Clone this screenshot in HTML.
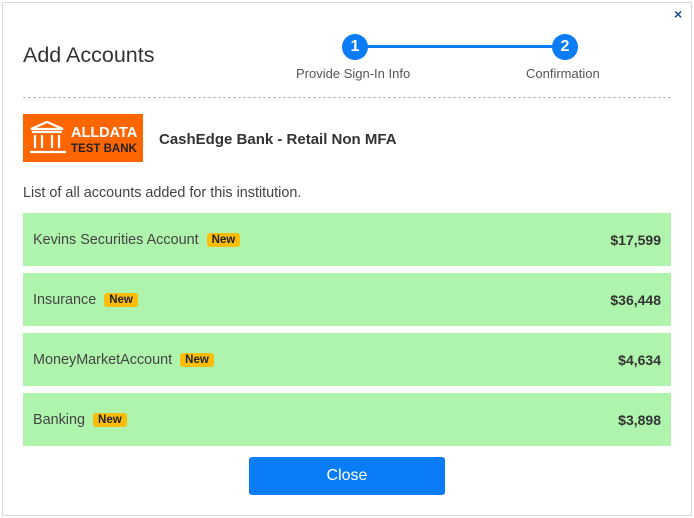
<!DOCTYPE html><html><head><style>
body{margin:0;width:694px;height:518px;background:#fff;font-family:"Liberation Sans",sans-serif;position:relative;overflow:hidden}
.frame{position:absolute;left:2px;top:2px;width:688px;height:512px;border:1px solid #d8d8d8}
.a{position:absolute}
.row{position:absolute;left:23px;width:648px;height:53px;background:#aef4ad}
.row .n{position:absolute;left:10px;top:19px;font-size:14.4px;color:#444}
.row .v{position:absolute;right:10px;top:19px;font-size:14px;font-weight:bold;color:#333}
.new{display:inline-block;background:#fbbd08;color:#222;font-size:11.5px;font-weight:bold;padding:1px 5px;border-radius:3px;margin-left:8px;vertical-align:1px}
.c{position:absolute;width:26px;height:26px;border-radius:50%;background:#0a7cf5;color:#fff;font-weight:bold;font-size:16px;text-align:center;line-height:26px}
</style></head><body>
<div class="frame"></div>
<div class="a" style="left:674px;top:6px;font-size:14px;font-weight:bold;color:#1a4f8a">×</div>
<div class="a" style="left:23px;top:43px;font-size:21.5px;color:#333">Add Accounts</div>
<div class="a" style="left:355px;top:45px;width:210px;height:3px;background:#0a7cf5"></div>
<div class="c" style="left:342px;top:34px">1</div>
<div class="c" style="left:552px;top:34px">2</div>
<div class="a" style="left:296px;top:66px;font-size:13px;color:#555">Provide Sign-In Info</div>
<div class="a" style="left:526px;top:66px;font-size:13px;color:#555">Confirmation</div>
<div class="a" style="left:23px;top:97px;width:648px;border-top:1px dashed #bbb"></div>
<div class="a" style="left:23px;top:114px;width:120px;height:48px;background:#ff6600">
<svg width="120" height="48" style="position:absolute;left:0;top:0"><g fill="none" stroke="#fff" stroke-width="2.2"><path d="M8 15 L24 8 L40 15 Z"/><path d="M9 18h30"/><path d="M12 21v13M19 21v13M29 21v13M36 21v13M7 38h36"/></g></svg>
<div class="a" style="left:48px;top:11px;color:#fff;font-weight:bold;font-size:14.5px">ALLDATA</div>
<div class="a" style="left:48px;top:29px;color:#222;font-weight:bold;font-size:11.5px">TEST BANK</div>
</div>
<div class="a" style="left:159px;top:131px;font-size:15px;font-weight:bold;color:#333">CashEdge Bank - Retail Non MFA</div>
<div class="a" style="left:23px;top:185px;font-size:14.4px;color:#444">List of all accounts added for this institution.</div>
<div class="row" style="top:213px"><span class="n">Kevins Securities Account<span class="new">New</span></span><span class="v">$17,599</span></div>
<div class="row" style="top:273px"><span class="n">Insurance<span class="new">New</span></span><span class="v">$36,448</span></div>
<div class="row" style="top:333px"><span class="n">MoneyMarketAccount<span class="new">New</span></span><span class="v">$4,634</span></div>
<div class="row" style="top:393px"><span class="n">Banking<span class="new">New</span></span><span class="v">$3,898</span></div>
<div class="a" style="left:249px;top:457px;width:196px;height:38px;background:#0a7cf5;border-radius:3px;color:#fff;font-size:16px;text-align:center;line-height:38px">Close</div>
</body></html>
